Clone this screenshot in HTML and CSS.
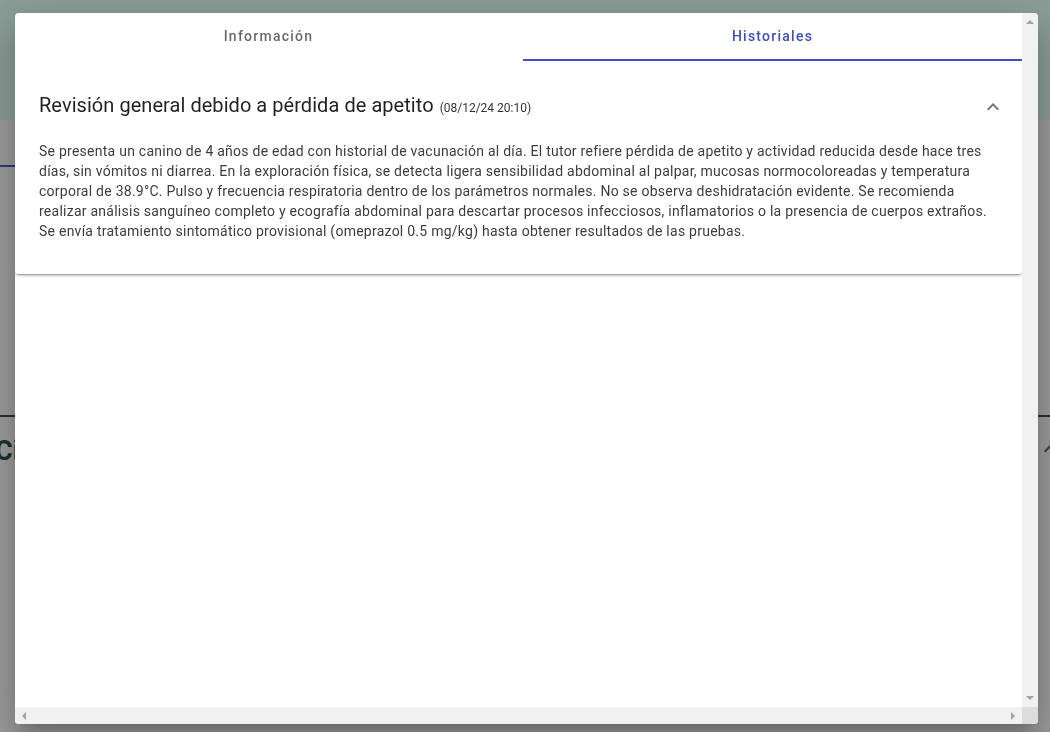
FILE: index.html
```html
<!DOCTYPE html>
<html lang="es">
<head>
<meta charset="utf-8">
<title>Historiales</title>
<link rel="stylesheet" href="styles.css">
</head>
<body>
<div class="page">
  <header class="page-header"></header>
  <div class="page-tabs"><span class="page-tab-ink"></span></div>
  <section class="page-section">
    <h2 class="page-section-title">Citas</h2>
    <svg class="page-chevron" viewBox="0 0 24 24" width="24" height="24"><path d="M7.41 15.41L12 10.83l4.59 4.58L18 14l-6-6-6 6z" fill="#3a3a3a"/></svg>
  </section>
</div>

<div class="backdrop">
  <div class="dialog">
    <div class="dialog-main">
      <div class="dialog-content">
        <nav class="tabs">
          <div class="tab">Información</div>
          <div class="tab tab-active">Historiales</div>
        </nav>
        <div class="panel">
          <div class="panel-header">
            <div class="panel-title">Revisión general debido a pérdida de apetito <span class="panel-date">(08/12/24 20:10)</span></div>
            <svg class="panel-icon" viewBox="0 0 24 24" width="24" height="24"><path d="M7.41 15.41L12 10.83l4.59 4.58L18 14l-6-6-6 6z" fill="rgba(0,0,0,0.54)"/></svg>
          </div>
          <div class="panel-body">
            <p>Se presenta un canino de 4 años de edad con historial de vacunación al día. El tutor refiere pérdida de apetito y actividad reducida desde hace tres días, sin vómitos ni diarrea. En la exploración física, se detecta ligera sensibilidad abdominal al palpar, mucosas normocoloreadas y temperatura corporal de 38.9°C. Pulso y frecuencia respiratoria dentro de los parámetros normales. No se observa deshidratación evidente. Se recomienda realizar análisis sanguíneo completo y ecografía abdominal para descartar procesos infecciosos, inflamatorios o la presencia de cuerpos extraños. Se envía tratamiento sintomático provisional (omeprazol 0.5 mg/kg) hasta obtener resultados de las pruebas.</p>
          </div>
        </div>
      </div>
      <div class="vscroll">
        <span class="arrow arrow-up"></span>
        <span class="arrow arrow-down"></span>
      </div>
    </div>
    <div class="hscroll-row">
      <div class="hscroll">
        <span class="arrow arrow-left"></span>
        <span class="arrow arrow-right"></span>
      </div>
      <div class="scroll-corner"></div>
    </div>
  </div>
</div>
</body>
</html>
```

FILE: styles.css
```css
html, body {
  margin: 0;
  padding: 0;
  width: 1050px;
  height: 732px;
  overflow: hidden;
  font-family: Roboto, "Liberation Sans", Arial, sans-serif;
}

.page {
  width: 1050px;
  height: 732px;
  background: #9d9d9d;
  display: flex;
  flex-direction: column;
}

.page-header {
  height: 120px;
  background: #8b9e97;
}

.page-tabs {
  height: 47px;
  display: flex;
  align-items: flex-end;
}

.page-tab-ink {
  width: 60px;
  height: 2px;
  background: #2f3b82;
}

.page-section {
  margin-top: 248px;
  border-top: 2px solid #25343a;
  display: flex;
  justify-content: space-between;
  align-items: flex-start;
  padding-top: 18px;
}

.page-section-title {
  margin: 0 0 0 -5px;
  font-size: 27px;
  font-weight: 700;
  line-height: 32px;
  color: #1f2e2e;
}

.page-chevron {
  margin-top: 2px;
  margin-right: -12px;
}

.backdrop {
  position: fixed;
  inset: 0;
}

.dialog {
  position: absolute;
  left: 15px;
  top: 13px;
  width: 1023px;
  height: 711px;
  background: #fff;
  border-radius: 4px;
  overflow: hidden;
  display: flex;
  flex-direction: column;
  box-shadow: 0 11px 15px -7px rgba(0,0,0,.2), 0 24px 38px 3px rgba(0,0,0,.14), 0 9px 46px 8px rgba(0,0,0,.12);
}

.dialog-main {
  flex: 1;
  display: flex;
  min-height: 0;
}

.dialog-content {
  flex: 1;
  min-width: 0;
}

.tabs {
  display: grid;
  grid-template-columns: 507px 1fr;
  column-gap: 1px;
  height: 48px;
}

.tab {
  display: flex;
  align-items: center;
  justify-content: center;
  font-size: 14px;
  font-weight: 500;
  letter-spacing: 1.25px;
  color: rgba(0,0,0,.6);
  box-sizing: border-box;
  padding-bottom: 2px;
}

.tab-active {
  color: #3f51b5;
  border-bottom: 2px solid #3f51b5;
  padding-bottom: 0;
}

.panel {
  background: #fff;
  border-radius: 0 0 4px 4px;
  clip-path: inset(0 -12px -12px -12px);
  box-shadow: 0 3px 1px -2px rgba(0,0,0,.2), 0 2px 2px 0 rgba(0,0,0,.14), 0 1px 5px 0 rgba(0,0,0,.12);
}

.panel-header {
  display: flex;
  align-items: center;
  justify-content: space-between;
  padding: 28px 17px 0 24px;
}

.panel-title {
  font-size: 20px;
  line-height: 32px;
  letter-spacing: 0.05px;
  color: rgba(0,0,0,.87);
}

.panel-date {
  font-size: 12px;
  letter-spacing: 0;
  color: #333;
  margin-left: 1px;
}

.panel-body {
  padding: 17px 24px 33px 24px;
}

.panel-body p {
  margin: 0;
  font-size: 14px;
  line-height: 20px;
  letter-spacing: 0.25px;
  color: #3d3d3d;
}

.vscroll {
  width: 16px;
  background: #f1f1f1;
  position: relative;
}

.hscroll-row {
  height: 17px;
  display: flex;
}

.hscroll {
  flex: 1;
  background: #f1f1f1;
  position: relative;
}

.scroll-corner {
  width: 16px;
  background: #dcdcdc;
}

.arrow {
  position: absolute;
  width: 0;
  height: 0;
  border: 4px solid transparent;
}

.arrow-up {
  left: 4px;
  top: 3px;
  border-bottom-color: #a3a3a3;
}

.arrow-down {
  left: 4px;
  bottom: 3px;
  border-top-color: #a3a3a3;
}

.arrow-left {
  left: 3px;
  top: 5px;
  border-right-color: #a3a3a3;
}

.arrow-right {
  right: 3px;
  top: 5px;
  border-left-color: #a3a3a3;
}
```
